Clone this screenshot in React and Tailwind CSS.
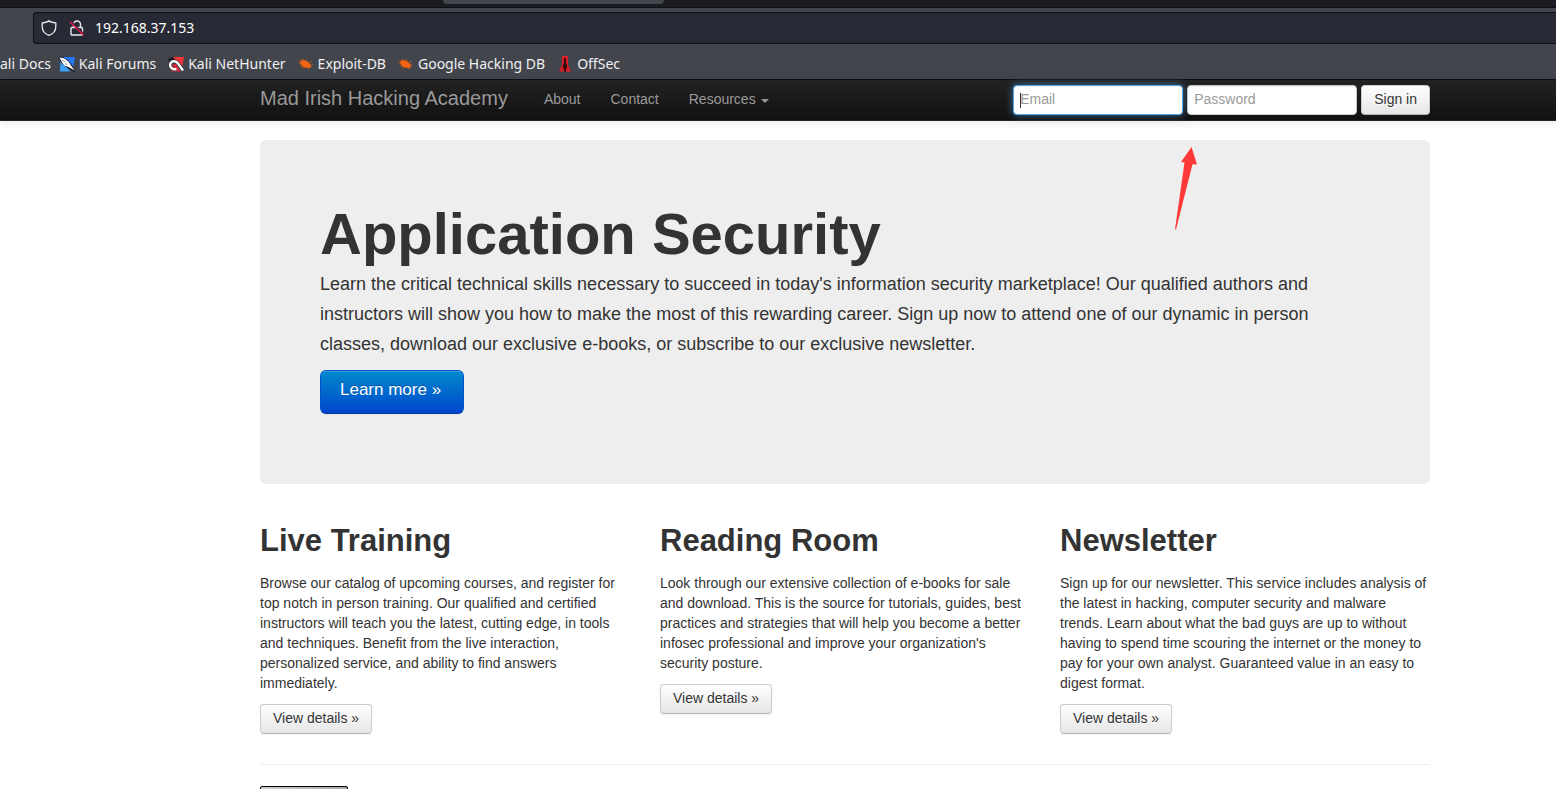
import React from "react";

function ForumsIcon() {
  return (
    <svg className="size-4 shrink-0" viewBox="0 0 16 16" aria-hidden="true">
      <path d="M4 1h12l-2 10z" fill="#2277fa" />
      <path d="M1.500 5l10 10.500H1z" fill="#38a3fb" />
      <path d="M0 1l3-.2L9 4l4 5 3 6.300-1 .7-6-4-5-3L1 5z" fill="#181b22" />
      <path d="M.5 1.500L5 2.300l4.500 3.200 2.500 4 3.500 5-5.500-3.300L5 9.500 2.500 5.500z" fill="#fff" />
      <path d="M3 4l3 2M6 7.500l2 1" stroke="#5b6272" strokeWidth=".7" />
    </svg>
  );
}

function NetHunterIcon() {
  return (
    <svg className="size-4 shrink-0" viewBox="0 0 16 16" aria-hidden="true">
      <path d="M4 1h12l-2 11-5-6z" fill="#f23238" />
      <path d="M0 3l5-2 2 2.500-5 3z" fill="#171a20" />
      <path d="M1 9l3 6.500h9l-5-6z" fill="#e32635" />
      <path d="M15 14.500L10 7.500C8 4.300 3.500 4.500 2.200 8c-.8 3.500 2.800 6 6.300 5" fill="none" stroke="#20222a" strokeWidth="3.600" />
      <path d="M5 8.500l3-.5 3 5-3-.5z" fill="#e32635" />
      <path d="M15 14.500L10 7.500C8 4.300 3.500 4.500 2.200 8c-.8 3.500 2.800 6 6.300 5" fill="none" stroke="#fff" strokeWidth="2.400" />
    </svg>
  );
}

function BugIcon() {
  return (
    <svg className="size-4 shrink-0" viewBox="0 0 16 16" aria-hidden="true">
      <path d="M2 6C3 3.500 6 3.800 8.500 5c2 1 4.500 3.500 5 6-2.500 1.500-5.500 1-8 0C3.500 10 2 8 2 6z" fill="#f26411" />
      <path
        d="M3 6L1 3.500M6 4.500L4.500 2.500M8 5l1.500-2.500M10 6.500L14 5M11.500 8l3.500.5M5 10l-3 .5M7 11l-3 2.500M10 11.500l1 2M2 7.500L.5 7"
        stroke="#b4551f"
        strokeWidth=".8"
        fill="none"
      />
    </svg>
  );
}

function OffSecIcon() {
  return (
    <svg className="size-4 shrink-0" viewBox="0 0 16 16" aria-hidden="true">
      <path d="M5 0h6v9l3 6.500H2L5 9z" fill="#dc1f26" />
      <path d="M7 2h2v5l1 2v3l-1 1v2.500H7V13l-1-1V9l1-2z" fill="#35090d" />
    </svg>
  );
}

function Bookmark({ icon, children }) {
  return (
    <a href="#" className="flex shrink-0 items-center gap-1">
      {icon}
      <span>{children}</span>
    </a>
  );
}

function BrowserChrome() {
  return (
    <header className="overflow-hidden bg-[#42454c] font-['Noto_Sans',sans-serif] text-sm text-[#f0f0f2]">
      <div className="h-2 border-b border-[#0f1014] bg-[#1b1c21] pl-[443px]">
        <div className="h-1 w-[221px] rounded-b bg-[#42454c]" />
      </div>
      <div className="pt-1 pl-[33px]">
        <div className="flex h-8 items-center rounded-l border border-r-0 border-[#0e0f13] bg-[#272a35] pl-[7px]">
          <svg className="size-4" viewBox="0 0 16 16" fill="none" stroke="#e9e9ed" strokeWidth="1.300" strokeLinejoin="round" aria-hidden="true">
            <path d="M8 .8C6.500 2.300 4 2.800 1.200 3v3.500C1.200 11 4 14 8 15.300c4-1.300 6.800-4.300 6.800-8.800V3C12 2.800 9.500 2.300 8 .8z" />
          </svg>
          <svg className="ml-3 size-4" viewBox="0 0 16 16" fill="none" aria-hidden="true">
            <path d="M4.500 7V4.500a3.500 3.500 0 0 1 7 0V7M3 7.500h9.500a1 1 0 0 1 1 1V14a1 1 0 0 1-1 1H3a1 1 0 0 1-1-1V8.500a1 1 0 0 1 1-1z" stroke="#e9e9ed" strokeWidth="1.400" />
            <path d="M2 1.500l13 12.500" stroke="#272a35" strokeWidth="1.500" />
            <path d="M1 2l13.500 13" stroke="#f0124b" strokeWidth="1.400" />
          </svg>
          <input
            aria-label="Address"
            defaultValue="192.168.37.153"
            className="ml-[10px] min-w-0 flex-1 bg-transparent text-white outline-none"
          />
        </div>
      </div>
      <nav aria-label="Bookmarks" className="flex h-9 items-center gap-3 border-b border-[#0f1014] pt-[5px] whitespace-nowrap">
        <a href="#" className="-mr-1">ali Docs</a>
        <Bookmark icon={<ForumsIcon />}>Kali Forums</Bookmark>
        <Bookmark icon={<NetHunterIcon />}>Kali NetHunter</Bookmark>
        <Bookmark icon={<BugIcon />}>Exploit-DB</Bookmark>
        <Bookmark icon={<BugIcon />}>Google Hacking DB</Bookmark>
        <Bookmark icon={<OffSecIcon />}>OffSec</Bookmark>
      </nav>
    </header>
  );
}

const field =
  "h-[30px] w-[170px] rounded border bg-white px-[6px] pb-[2px] text-sm text-[#555] caret-transparent outline-none placeholder:text-[#999]";
const lightButton =
  "inline-flex h-[30px] items-center rounded border border-[#ccc] border-b-[#b3b3b3] bg-linear-to-b from-white to-[#e6e6e6] px-3 pb-[2px] text-sm text-[#333] shadow-[inset_0_1px_0_rgba(255,255,255,.2),0_1px_2px_rgba(0,0,0,.05)] [text-shadow:0_1px_1px_rgba(255,255,255,.75)]";

function Navbar() {
  return (
    <nav className="border-b border-[#252525] bg-linear-to-b from-[#222] to-[#111] pr-[126px] pl-[260px] text-[#999] shadow-[0_1px_10px_rgba(0,0,0,.1)]">
      <div className="flex h-10 items-center text-sm">
        <a href="#" className="pb-1 text-xl">Mad Irish Hacking Academy</a>
        <div className="ml-9 flex gap-[30px] pb-[2px]">
          <a href="#">About</a>
          <a href="#">Contact</a>
          <a href="#" className="flex items-center gap-[5px]">
            Resources
            <span className="mt-[3px] border-x-4 border-t-4 border-x-transparent border-t-[#999]" />
          </a>
        </div>
        <form className="ml-auto flex gap-1" onSubmit={(e) => e.preventDefault()}>
          <div className="relative">
            <input
              type="text"
              aria-label="Email"
              placeholder="Email"
              className={`${field} border-[#52a8ec] shadow-[inset_0_1px_1px_rgba(0,0,0,.075),0_0_8px_rgba(82,168,236,.6)]`}
            />
            <span className="absolute top-2 left-[7px] h-[15px] w-px bg-[#333]" />
          </div>
          <input
            type="password"
            aria-label="Password"
            placeholder="Password"
            className={`${field} border-[#ccc] shadow-[inset_0_1px_1px_rgba(0,0,0,.075)]`}
          />
          <button type="submit" className={lightButton}>Sign in</button>
        </form>
      </div>
    </nav>
  );
}

const sections = [
  {
    title: "Live Training",
    text: "Browse our catalog of upcoming courses, and register for top notch in person training. Our qualified and certified instructors will teach you the latest, cutting edge, in tools and techniques. Benefit from the live interaction, personalized service, and ability to find answers immediately.",
  },
  {
    title: "Reading Room",
    text: "Look through our extensive collection of e-books for sale and download. This is the source for tutorials, guides, best practices and strategies that will help you become a better infosec professional and improve your organization's security posture.",
  },
  {
    title: "Newsletter",
    text: "Sign up for our newsletter. This service includes analysis of the latest in hacking, computer security and malware trends. Learn about what the bad guys are up to without having to spend time scouring the internet or the money to pay for your own analyst. Guaranteed value in an easy to digest format.",
  },
];

export default function App() {
  return (
    <div className="h-screen overflow-hidden bg-white font-['Liberation_Sans',sans-serif] text-[#333]">
      <BrowserChrome />
      <Navbar />
      <main className="pt-[19px] pr-[126px] pl-[260px]">
        <section className="relative rounded-md bg-[#eee] p-[60px]">
          <h1 className="mb-px text-[58px] leading-[68px] font-bold">Application Security</h1>
          <p className="mb-[11px] text-lg leading-[30px]">
            Learn the critical technical skills necessary to succeed in today's information security marketplace! Our
            qualified authors and instructors will show you how to make the most of this rewarding career. Sign up now
            to attend one of our dynamic in person classes, download our exclusive e-books, or subscribe to our
            exclusive newsletter.
          </p>
          <a
            href="#"
            className="mb-[10px] inline-flex h-11 items-center rounded-md border border-[#0055cc] border-b-[#003aa3] bg-linear-to-b from-[#0088cc] to-[#0044cc] pr-[22px] pl-[19px] pb-1 align-top text-[17px] text-white shadow-[inset_0_1px_0_rgba(255,255,255,.2),0_1px_2px_rgba(0,0,0,.05)] [text-shadow:0_-1px_0_rgba(0,0,0,.25)]"
          >
            Learn more »
          </a>
          <svg className="absolute top-[7px] right-[232px] h-[84px] w-[24px]" viewBox="0 0 24 84" aria-hidden="true">
            <path d="M17.500 0L23 17.500l-4.500-.3L2 82.500l-1-.2L10.500 15.500 7 15z" fill="#ff3838" />
          </svg>
        </section>
        <div className="mt-[30px] grid grid-cols-3 gap-[30px]">
          {sections.map((s) => (
            <section key={s.title} className="text-sm">
              <h2 className="mt-[7px] mb-3 text-[31px] leading-10 font-bold">{s.title}</h2>
              <p className="mb-[11px] leading-5">{s.text}</p>
              <a href="#" className={lightButton}>View details »</a>
            </section>
          ))}
        </div>
        <hr className="mt-[30px] mb-[21px] border-[#eee]" />
        <div className="h-[31px] w-[88px] rounded-[2px] border border-black bg-linear-to-r from-[#ccd0cb] to-[#a6aaa4]" />
      </main>
    </div>
  );
}
